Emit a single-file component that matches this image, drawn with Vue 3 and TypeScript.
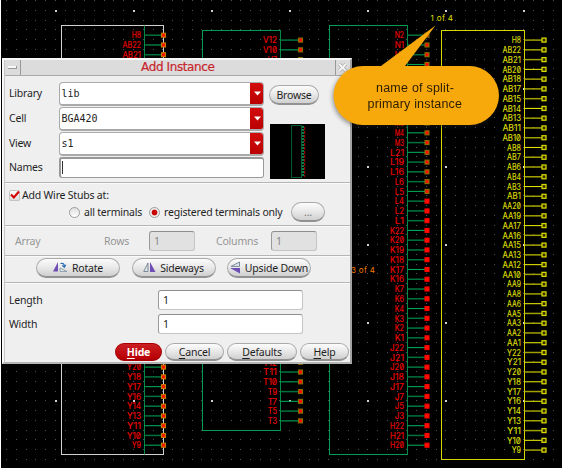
<script setup lang="ts">
interface Pin {
  label: string
  y: number
}

interface Block {
  name: string
  x: number
  y: number
  w: number
  h: number
  edge: number
  pinX: number
  pins: Pin[]
}

const STEP = 9.762

function pinsFrom(y: number, labels: string): Pin[] {
  return labels.split(' ').map((label, i) => ({ label, y: y + i * STEP }))
}

const blocks: Block[] = [
  {
    name: 'white', x: 61.5, y: 25.5, w: 102, h: 429, edge: 144.5, pinX: 163.5,
    pins: [
      ...pinsFrom(35.2, 'H8 AB22 AB21'),
      ...pinsFrom(367.1, 'Y20 Y18 Y17 Y16 Y14 Y13 Y11 Y10 Y9'),
    ],
  },
  {
    name: 'green', x: 202.5, y: 30.5, w: 78, h: 400, edge: 280.5, pinX: 300.5,
    pins: [
      ...pinsFrom(40.1, 'V12 V10 V7'),
      ...pinsFrom(362.3, 'T12 T11 T10 T9 T7 T5 T3'),
    ],
  },
  {
    name: 'green', x: 329.5, y: 25.5, w: 78, h: 429, edge: 407.5, pinX: 427,
    pins: [
      ...pinsFrom(35.2, 'N2 N1 M7'),
      { label: '', y: 64.5 },
      ...pinsFrom(
        123.06,
        'M5 M4 M3 L21 L19 L16 L6 L5 L4 L2 L1 K22 K20 K19 K18 K17 K16 K7 K6 K4 K3 K2 K1 J22 J21 J20 J18 J17 J7 J5 J3 H22 H21 H20',
      ),
    ],
  },
  {
    name: 'yellow', x: 441.5, y: 30.5, w: 83, h: 429, edge: 524.5, pinX: 544,
    pins: pinsFrom(
      40.1,
      'H8 AB22 AB21 AB20 AB18 AB17 AB15 AB14 AB13 AB11 AB10 AB8 AB7 AB6 AB4 AB3 AB1 AA20 AA19 AA17 AA16 AA15 AA13 AA12 AA10 AA9 AA8 AA6 AA5 AA3 AA2 AA1 Y22 Y21 Y20 Y18 Y17 Y16 Y14 Y13 Y11 Y10 Y9',
    ),
  },
]

const dots: { x: number; y: number; major: boolean }[] = []
for (let r = -1; r < 47; r++) {
  for (let c = -5; c < 52; c++) {
    dots.push({
      x: Math.floor(55.4 + c * STEP),
      y: Math.floor(10.4 + r * STEP),
      major: r % 8 === 0 && c % 8 === 0,
    })
  }
}

const combos = [
  { label: 'Library', value: 'lib' },
  { label: 'Cell', value: 'BGA420' },
  { label: 'View', value: 's1' },
]

function filled(b: Block, p: Pin) {
  return b.pinX === 427 && p.y > 198
}
</script>

<template>
  <main class="screen">
    <svg class="canvas" width="562" height="468" viewBox="0 0 562 468">
      <rect x="1" width="561" height="468" fill="#000" />
      <g shape-rendering="crispEdges">
        <rect
          v-for="(d, i) in dots" :key="i" :x="d.x" :y="d.y"
          :width="d.major ? 2 : 1" :height="d.major ? 2 : 1"
          :class="d.major ? 'dot-major' : 'dot'"
        />
      </g>
      <g v-for="b in blocks" :key="b.x" :class="['block', b.name]">
        <rect class="outline" :x="b.x" :y="b.y" :width="b.w" :height="b.h" />
        <line class="edge" :x1="b.edge" :x2="b.edge" :y1="b.y" :y2="b.y + b.h" />
        <g v-for="(p, i) in b.pins" :key="i">
          <line :class="['wire', { dim: i % 2 === 0 }]" :x1="b.edge" :x2="b.pinX" :y1="p.y" :y2="p.y" />
          <rect
            :class="['pin', { solid: filled(b, p) }]"
            :x="b.pinX - 2" :y="p.y - 2" width="4" height="4"
          />
          <text
            v-if="p.label"
            :x="b.edge - 3.5 - p.label.length * 4.65" :y="p.y + 3.2"
            :textLength="p.label.length * 4.65" lengthAdjust="spacingAndGlyphs"
          >{{ p.label }}</text>
        </g>
      </g>
      <text class="tag yellow-tag" x="430.5" y="21" textLength="22.5">1 of 4</text>
      <text class="tag orange-tag" x="351" y="273" textLength="24">3 of 4</text>
    </svg>

    <section class="dialog">
      <header class="titlebar">
        <span class="tb-btn"><i class="dash"></i></span>
        <h1>Add Instance</h1>
        <span class="tb-btn close">
          <svg width="11" height="11" viewBox="0 0 11 11">
            <path d="M2 2l7 7M9 2l-7 7" stroke="#b4b4b4" stroke-width="3.6" />
            <path d="M2 2l7 7M9 2l-7 7" stroke="#f4f4f4" stroke-width="1.8" />
          </svg>
        </span>
      </header>

      <div class="sec main-sec">
        <div class="fields">
          <div v-for="c in combos" :key="c.label" class="row combo-row">
            <label>{{ c.label }}</label>
            <div class="combo">
              <span class="mono">{{ c.value }}</span>
              <b class="arrow"><svg width="7" height="5" viewBox="0 0 7 5"><path d="M0 .5h7L3.5 4.5z" fill="#fff" /></svg></b>
            </div>
          </div>
          <div class="row names-row">
            <label>Names</label>
            <div class="entry names"><i class="caret"></i></div>
          </div>
        </div>
        <div class="side">
          <button class="btn browse">Browse</button>
          <svg class="thumb" width="55" height="55" viewBox="0 0 55 55">
            <rect width="55" height="55" fill="#000" />
            <rect x="21.5" y="1.5" width="10" height="52" fill="none" stroke="#005c31" />
            <path d="M33 2v51" stroke="#0b7d45" stroke-width="2" stroke-dasharray="2 1" />
            <path d="M34.7 3v50" stroke="#b40000" stroke-width="1" stroke-dasharray="3 1" />
          </svg>
        </div>
      </div>

      <div class="sec stubs">
        <div class="check-line">
          <span class="check"><svg width="11" height="11" viewBox="0 0 11 11"><path d="M2 4.5l2.800 3L10 1.500" fill="none" stroke="#d40000" stroke-width="2.1" /></svg></span>
          <span>Add Wire Stubs at:</span>
        </div>
        <div class="radio-line">
          <i class="radio"></i><span class="t-all">all terminals</span>
          <i class="radio on"></i><span class="t-reg">registered terminals only</span>
          <button class="btn dots">...</button>
        </div>
      </div>

      <div class="sec array">
        <span class="a1">Array</span><span class="a2">Rows</span>
        <div class="entry off e1">1</div>
        <span class="a3">Columns</span>
        <div class="entry off">1</div>
      </div>

      <div class="sec transforms">
        <button class="btn">
          <svg width="15" height="13" viewBox="0 0 15 13">
            <path d="M0 10.500L5 1v9.500z" fill="#6f4fb5" />
            <path d="M7 10.500V7l7 3.500z" fill="#dfe6ec" stroke="#8493a3" stroke-width=".8" />
            <path d="M7.500 2.500q4-1 3.700 3M9.300 4.300l2 2 1.500-2.500" fill="none" stroke="#2a6db5" stroke-width="1.2" />
          </svg><span>Rotate</span>
        </button>
        <button class="btn">
          <svg width="13" height="13" viewBox="0 0 13 13">
            <path d="M.7 10.500L5 2v8.500z" fill="#dfe6ec" stroke="#71808f" stroke-width=".9" />
            <path d="M7 1l5.500 10H7z" fill="#6f4fb5" />
          </svg><span>Sideways</span>
        </button>
        <button class="btn">
          <svg width="11" height="13" viewBox="0 0 11 13">
            <path d="M1 5.400L9.500 1v4.400z" fill="#dfe6ec" stroke="#71808f" stroke-width=".9" />
            <path d="M0 7h10v5.500z" fill="#6f4fb5" />
          </svg><span>Upside Down</span>
        </button>
      </div>

      <div class="sizes">
        <div class="size-row"><label>Length</label><div class="entry">1</div></div>
        <div class="size-row"><label>Width</label><div class="entry">1</div></div>
      </div>

      <footer class="actions">
        <button class="btn hide"><span><u>H</u>ide</span></button>
        <button class="btn cancel"><span><u>C</u>ancel</span></button>
        <button class="btn defaults"><span><u>D</u>efaults</span></button>
        <button class="btn help"><span><u>H</u>elp</span></button>
      </footer>
    </section>

    <svg class="callout" width="562" height="140" viewBox="0 0 562 140">
      <path d="M363 66H381L435.500 25.500 405 66H469.500a29.500 29.500 0 0 1 0 59H363a29.500 29.500 0 0 1 0-59z" />
      <text x="376" y="92" textLength="78">name of split-</text>
      <text x="367.500" y="108" textLength="94.500">primary instance</text>
    </svg>
  </main>
</template>

<style>
body { margin: 0; background: #fff; }
</style>

<style scoped>
.screen { position: relative; width: 562px; height: 468px; overflow: hidden; background: #fff; }
.canvas { display: block; }
.dot { fill: #505058; }
.dot-major { fill: #d0d0d0; }

.block text { font: 9px Inter, sans-serif; font-feature-settings: 'zero'; fill: #f00000; stroke: #f00000; stroke-width: .15px; }
.outline { fill: none; stroke: #009c51; stroke-width: 1; }
.edge { stroke: #008a48; stroke-width: 1; }
.wire { stroke: #00a556; stroke-width: 1.1; }
.wire.dim { stroke: #00733c; stroke-width: 1.5; }
.pin { fill: #ff1000; stroke: #8a7000; stroke-width: 1.1; }
.pin.solid { stroke: #ff0000; }
.white .outline { stroke: #d2d2d2; }
.white .pin { stroke: #c48000; }
.yellow .outline, .yellow .edge { stroke: #d6d600; }
.yellow .wire { stroke: #e0e000; }
.yellow .wire.dim { stroke: #a0a000; }
.yellow .pin { fill: #302f00; stroke: #d6d600; stroke-width: 1.3; }
.yellow text { fill: #dcdc00; stroke: #dcdc00; }
.tag { font: 8px Inter, sans-serif; }
.yellow-tag { fill: #e2e200; }
.orange-tag { fill: #f57c00; }

.dialog {
  position: absolute; left: 2px; top: 58px; width: 349.500px; height: 306px; box-sizing: border-box;
  background: #efefef; border: 2px solid #f8f8f8; border-right-color: #a2a2a2; border-bottom-color: #b4b4b4;
  display: flex; flex-direction: column; color: #1f1f1f;
  font: 10.500px "Noto Sans", sans-serif; letter-spacing: -.2px; box-shadow: inset 1px 0 #c5c5c5;
}
.titlebar { display: flex; height: 16px; flex: none; margin-left: 1px; background: #dcdcdc; border-bottom: 1px solid #aaa; box-sizing: border-box; }
.titlebar h1 { flex: 1; margin: 0; text-align: center; font: 12px/15px "DejaVu Sans", sans-serif; color: #c8262c; letter-spacing: -.4px; -webkit-text-stroke: .2px #c8262c; }
.tb-btn { width: 15px; border-right: 1px solid #999; display: flex; align-items: center; justify-content: center; }
.tb-btn.close { border-right: 0; border-left: 1px solid #999; width: 14px; }
.dash { width: 8px; height: 2px; background: #f8f8f8; border-right: 1px solid #999; border-bottom: 1px solid #999; }

.sec { border-bottom: 1px solid #b5b5b5; box-shadow: 0 1px #fafafa; box-sizing: border-box; flex: none; margin-left: 1px; }
.main-sec { height: 107px; display: flex; padding: 6px 0 0 4px; }
.fields { width: 256px; }
.row { display: flex; }
.row label { width: 50px; }
.combo-row { height: 25px; }
.combo-row label { line-height: 23px; }
.combo {
  width: 205px; height: 23.500px; box-sizing: border-box; display: flex; border: 1px solid #aaa; border-bottom-width: 2px;
  border-radius: 4px; background: #fff; overflow: hidden; justify-content: space-between;
}
.mono { font: 10px/22px "DejaVu Sans Mono", monospace; letter-spacing: 0; padding-left: 1.500px; color: #222; }
.arrow { width: 14px; background: linear-gradient(#d40d0d, #b80000); display: flex; align-items: center; justify-content: center; margin: -1px -1px -2px 0; }
.names-row { height: 22px; }
.names-row label { line-height: 20px; }
.entry { background: #fff; box-sizing: border-box; border: 1px solid #c4c4c4; border-top-color: #8d8d8d; border-left-color: #999; border-radius: 3px; padding-left: 4px; height: 20px; line-height: 19px; }
.names { width: 205px; height: 21px; border: 2px solid #999; border-bottom-width: 1px; border-right-width: 1px; padding: 2px 0 0 1px; }
.caret { display: block; width: 1px; height: 13px; background: #333; }
.side { padding-left: 4px; }

.btn {
  display: flex; align-items: center; justify-content: center; box-sizing: border-box; height: 20px; padding: 0;
  border: 1px solid #aaa; border-bottom: 2px solid #929292; border-radius: 10px; white-space: nowrap;
  background: linear-gradient(#fcfcfc, #e8e8e8 50%, #d0d0d0); font: 10.500px "Noto Sans", sans-serif; letter-spacing: -.2px; color: #1f1f1f;
}
.browse { width: 50px; margin: 3px 0 19px 0; }
.thumb { display: block; margin-left: 1px; }

.stubs { height: 43px; padding: 5px 0 0 4px; }
.check-line { display: flex; height: 14px; align-items: center; }
.check { width: 11px; height: 11px; background: linear-gradient(#fff, #d8d8d8); border-radius: 2px; margin-right: 2px; display: flex; box-shadow: inset 0 0 0 1px #c4c4c4; }
.radio-line { display: flex; align-items: center; height: 20px; padding-left: 60px; }
.radio { width: 11px; height: 11px; flex: none; box-sizing: border-box; border-radius: 50%; border: 1px solid #9c9c9c; background: linear-gradient(#e0e0e0, #fff); margin-right: 4px; }
.radio.on { background: radial-gradient(circle, #ca0000 0 2.500px, #eee 3.300px); }
.t-all { width: 65px; }
.t-reg { width: 127px; white-space: nowrap; }
.dots { width: 34px; color: #777; }

.array { height: 30px; display: flex; align-items: center; padding-left: 10px; color: #969696; }
.a1 { width: 89px; }
.a2 { width: 45px; }
.a3 { width: 55px; }
.entry.off { width: 46px; background: #e1e1e1; color: #888; }
.e1 { margin-right: 21px; }

.transforms { height: 27px; display: flex; gap: 11.500px; padding: 2px 0 0 31px; }
.transforms .btn { width: 84px; gap: 4px; }

.sizes { margin: 7px 0 0 5px; }
.size-row { display: flex; height: 23.500px; }
.size-row label { width: 149px; line-height: 20px; }
.size-row .entry { width: 145px; }

.actions { display: flex; gap: 3px; margin: 6px 0 0 111px; }
.actions .btn { height: 18px; border-radius: 9px; }
.actions u { text-underline-offset: 2px; text-decoration-thickness: 1px; }
.actions .hide { width: 47px; background: linear-gradient(#c92024, #b90004); border-color: #a80004; color: #fff; font-weight: 700; }
.actions .cancel { width: 59px; }
.actions .defaults { width: 70px; }
.actions .help { width: 49px; }

.callout { position: absolute; left: 0; top: 0; filter: drop-shadow(-1px 2px 2px rgba(40, 40, 40, .45)); }
.callout path { fill: #f7a90b; }
.callout text { font: 12.500px "Liberation Sans", sans-serif; fill: #2a1c04; }
</style>
